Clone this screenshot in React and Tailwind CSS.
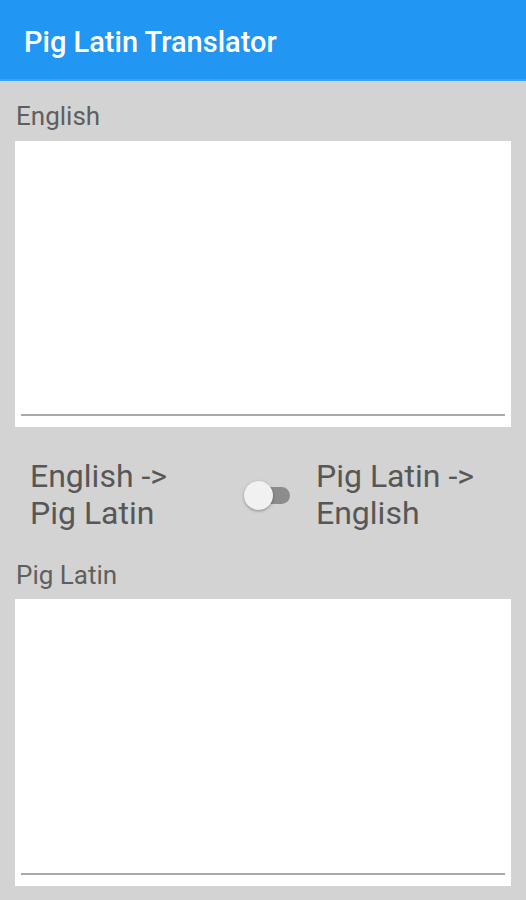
export default function App() {
  const font = { fontFamily: "Roboto, 'Noto Sans', sans-serif" };
  return (
    <div className="min-h-[900px] w-full bg-[#d3d3d3]" style={font}>
      <div className="h-[81px] bg-[#2196f3] border-b-2 border-[#3aa2f5] flex items-center pl-[24px] pt-[6px]">
        <span className="text-white text-[29px] font-medium leading-none">Pig Latin Translator</span>
      </div>
      <div className="px-[15px]">
        <div className="pt-[20px] pl-[1px] text-[26px] leading-[30px] text-[#5f5f5f]">English</div>
        <div className="mt-[10px] h-[286px] bg-white flex flex-col justify-end px-[6px] pb-[11px]">
          <div className="h-[2px] bg-[#a9a9a9]"></div>
        </div>
        <div className="flex items-center mt-[30px] h-[76px]">
          <div className="w-[220px] pl-[15px] text-[32px] leading-[37px] text-[#575757]">
            English -&gt;<br />Pig Latin
          </div>
          <div className="relative w-[50px] h-[34px] flex items-center">
            <div className="absolute left-[15px] w-[40px] h-[17px] rounded-full bg-[#8c8c8c]"></div>
            <div className="absolute left-[9px] w-[29px] h-[29px] rounded-full bg-[#f1f1f1] shadow-[0_1px_3px_rgba(0,0,0,0.35)]"></div>
          </div>
          <div className="pl-[31px] text-[32px] leading-[37px] text-[#575757]">
            Pig Latin -&gt;<br />English
          </div>
        </div>
        <div className="mt-[27px] pl-[1px] text-[26px] leading-[30px] text-[#5f5f5f]">Pig Latin</div>
        <div className="mt-[9px] h-[287px] bg-white flex flex-col justify-end px-[6px] pb-[11px]">
          <div className="h-[2px] bg-[#a9a9a9]"></div>
        </div>
      </div>
    </div>
  );
}
